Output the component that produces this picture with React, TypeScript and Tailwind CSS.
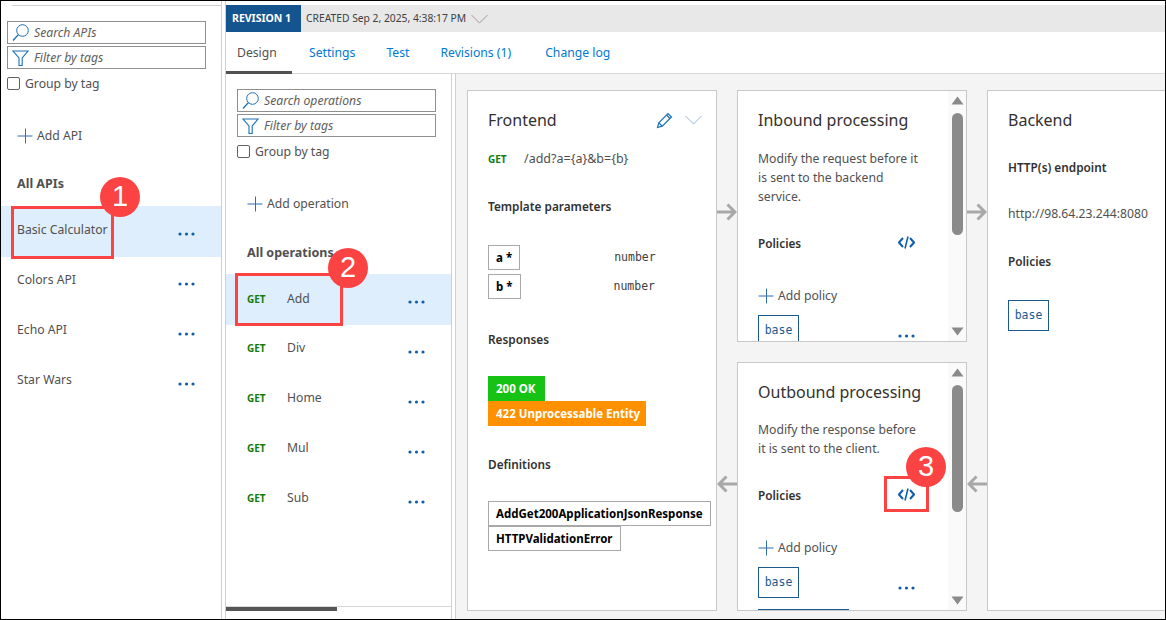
import React from "react";

const Search = () => (
  <svg width="18" height="18" viewBox="0 0 18 18" fill="none" stroke="#1a6fb5" strokeWidth="1" className="shrink-0">
    <circle cx="10.5" cy="6.5" r="5.8" />
    <path d="M6.4 10.6 1 16.5" strokeWidth="1.4" />
  </svg>
);
const Funnel = () => (
  <svg width="18" height="18" viewBox="0 0 18 18" fill="none" stroke="#1a6fb5" strokeWidth="1.1" className="shrink-0">
    <path d="M1 2h15l-5.8 7v7.5H7V9z" />
  </svg>
);
const Plus = () => (
  <svg width="16" height="16" viewBox="0 0 16 16" stroke="#2f6fb0" strokeWidth="1" className="shrink-0">
    <path d="M8.5 0.5v15M0.5 8h15" />
  </svg>
);
const Dots = () => (
  <svg width="17" height="4" viewBox="0 0 17 4" fill="#0f5ea8" className="shrink-0 block">
    <circle cx="2" cy="2" r="1.6" />
    <circle cx="8.5" cy="2" r="1.6" />
    <circle cx="15" cy="2" r="1.6" />
  </svg>
);
const Chevron = ({ c = "#8fb8dc" }: { c?: string }) => (
  <svg width="17" height="10" viewBox="0 0 17 10" fill="none" stroke={c} strokeWidth="1" className="shrink-0">
    <path d="M0.5 1 8.5 9l8-8" />
  </svg>
);
const Code = () => (
  <svg width="17" height="13" viewBox="0 0 17 13" fill="none" stroke="#0f5ea8" strokeWidth="2" className="shrink-0 -mt-[4px]">
    <path d="M5 2 1 6.5 5 11M12 2l4 4.5-4 4.5" />
    <path d="M10 0.5 7 12.5" strokeWidth="1.6" />
  </svg>
);
const Pencil = () => (
  <svg width="17" height="17" viewBox="0 0 17 17" fill="none" stroke="#1a6fb5" strokeWidth="1.2">
    <path d="M1.5 15.5 2.8 10.8 12 1.5l3.5 3.5-9.2 9.2zM2.8 10.8l3.5 3.4M10.5 3l3.5 3.5" />
  </svg>
);
const Arrow = ({ left }: { left?: boolean }) => (
  <svg width="20" height="18" viewBox="0 0 20 18" fill="none" stroke="#a8a8a8" strokeWidth="3" className={left ? "rotate-180" : ""}>
    <path d="M0 9h18M10.5 1.5 18 9l-7.5 7.5" />
  </svg>
);
const Tri = ({ down }: { down?: boolean }) => (
  <svg width="13" height="9" viewBox="0 0 13 9" fill="#8a8a8a" className={down ? "rotate-180" : ""}>
    <path d="M6.5 0.5 12.5 8.5H0.5z" />
  </svg>
);

const SearchBox = ({ text, icon }: { text: string; icon: React.ReactNode }) => (
  <div className="h-[23px] flex items-center pl-[4px] gap-[4px] border border-[#8f8f8f] italic text-[#605e5c] text-[12.2px]">
    {icon}
    <span className="pt-[2px]">{text}</span>
  </div>
);

const Group = () => (
  <div className="flex items-center gap-[5px] text-[#505050] text-[12.2px] mt-[3px] h-[20px]">
    <span className="w-[13px] h-[13px] border border-[#606060] rounded-[2px] -mt-[2px]" />
    <span>Group by tag</span>
  </div>
);

const ApiRow = ({ name, active }: { name: string; active?: boolean }) => (
  <div className={`shrink-0 pl-[16px] pr-[26px] flex justify-between ${active ? "h-[51px] bg-[#deeefc]" : "h-[50px]"}`}>
    <span className={`text-[#505050] text-[12.2px] leading-[18px] ${active ? "mt-[15px]" : "mt-[14px]"}`}>{name}</span>
    <span className={active ? "mt-[26px]" : "mt-[25px]"}><Dots /></span>
  </div>
);

const OpRow = ({ name, active }: { name: string; active?: boolean }) => (
  <div className={`shrink-0 pl-[21px] pr-[26px] flex justify-between ${active ? "h-[51px] bg-[#deeefc]" : "h-[50px]"}`}>
    <div className={`flex h-[18px] items-center ${active ? "mt-[16px]" : "mt-[14px]"}`}>
      <span className="w-[40px] text-[#107c10] text-[10px] font-bold">GET</span>
      <span className="text-[#505050] text-[12.2px]">{name}</span>
    </div>
    <span className={active ? "mt-[26px]" : "mt-[25px]"}><Dots /></span>
  </div>
);

const Scroll = ({ thumb }: { thumb: string }) => (
  <div className="w-[18px] shrink-0 bg-[#fafafa] flex flex-col items-center pt-[5px] pb-[5px]">
    <Tri />
    <div className={`w-[11px] rounded-full bg-[#8a8a8a] mt-[8px] ${thumb}`} />
    <div className="flex-1" />
    <Tri down />
  </div>
);

const Heading = ({ children }: { children: React.ReactNode }) => (
  <div className="text-[#323130] text-[16px] leading-[24px]">{children}</div>
);
const Sub = ({ children, className = "" }: { children: React.ReactNode; className?: string }) => (
  <div className={`text-[#323130] text-[11.8px] font-semibold leading-[16px] pb-[2px] ${className}`}>{children}</div>
);
const Chip = ({ children, className = "" }: { children: React.ReactNode; className?: string }) => (
  <div className={`h-[25px] flex items-center px-[7px] border border-[#a8a8a8] text-black text-[11.5px] font-bold w-fit ${className}`}>{children}</div>
);
const Base = ({ className = "" }: { className?: string }) => (
  <div className={`w-[41px] h-[31px] shrink-0 border border-[#1b5a8f] text-[#1b5a8f] text-[11.5px] flex items-center justify-center ${className}`} style={{ fontFamily: "'DejaVu Sans Mono', monospace" }}>base</div>
);
const AddPolicy = () => (
  <div className="flex items-center gap-[4px] text-[#505050] text-[12.2px] h-[18px]"><Plus />Add policy</div>
);

const Mark = ({ n, className }: { n: number; className: string }) => (
  <div className={`absolute w-[40px] h-[40px] rounded-full bg-[#fb4343] text-white text-[29px] flex items-center justify-center ${className}`} style={{ fontFamily: "'Liberation Sans', sans-serif" }}>{n}</div>
);

export default function App() {
  return (
    <div className="relative w-[1166px] h-[620px] bg-white border border-black flex overflow-hidden" style={{ fontFamily: "'Noto Sans', sans-serif" }}>
      {/* APIs */}
      <div className="w-[221px] h-full shrink-0 border-r border-[#d0d0d0] flex flex-col">
        <div className="h-[4px] shrink-0" />
        <div className="ml-[11px] h-px bg-[#d0d0d0] shrink-0" />
        <div className="px-[6px] mt-[15px] flex flex-col gap-[2px] w-[211px]">
          <SearchBox text="Search APIs" icon={<Search />} />
          <SearchBox text="Filter by tags" icon={<Funnel />} />
          <Group />
        </div>
        <div className="ml-[16px] mt-[33px] h-[18px] flex items-center gap-[4px] text-[#505050] text-[12.2px]"><Plus />Add API</div>
        <div className="ml-[16px] mt-[30px] h-[18px] flex items-center text-[#505050] text-[12.5px] font-bold">All APIs</div>
        <div className="mt-[13px] flex flex-col">
          <ApiRow name="Basic Calculator" active />
          <ApiRow name="Colors API" />
          <ApiRow name="Echo API" />
          <ApiRow name="Star Wars" />
        </div>
      </div>

      {/* Main */}
      <div className="ml-[3px] flex-1 min-w-0 h-full border-l border-[#d0d0d0] flex flex-col">
        <div className="h-[4px] shrink-0" />
        <div className="h-[27px] shrink-0 bg-[#e8e8e8] flex items-center text-[#404040] text-[10.3px] gap-[5px]">
          <div className="w-[75px] h-full bg-[#15558f] text-white font-bold text-[10.5px] flex items-center pl-[6px]">REVISION 1</div>
          <span>CREATED Sep 2, 2025, 4:38:17 PM</span>
          <Chevron c="#9a9a9a" />
        </div>
        <div className="h-[42px] shrink-0 border-b border-[#d8d8d8] flex text-[12.2px] text-[#0078d4]">
          <div className="w-[66px] h-[42px] border-b-[3px] border-[#505050] text-[#505050] pl-[11px] pt-[12px]">Design</div>
          <div className="ml-[17px] pt-[12px]">Settings</div>
          <div className="ml-[31px] pt-[12px]">Test</div>
          <div className="ml-[31px] pt-[12px]">Revisions (1)</div>
          <div className="ml-[34px] pt-[12px]">Change log</div>
        </div>
        <div className="flex-1 min-h-0 flex">
          {/* Operations */}
          <div className="w-[226px] shrink-0 border-r border-[#d0d0d0] flex flex-col">
            <div className="pl-[11px] pr-[15px] mt-[15px] flex flex-col gap-[2px]">
              <SearchBox text="Search operations" icon={<Search />} />
              <SearchBox text="Filter by tags" icon={<Funnel />} />
              <Group />
            </div>
            <div className="ml-[21px] mt-[33px] h-[18px] flex items-center gap-[4px] text-[#505050] text-[12.2px]"><Plus />Add operation</div>
            <div className="ml-[21px] mt-[31px] h-[18px] flex items-center text-[#505050] text-[12.5px] font-bold">All operations</div>
            <div className="mt-[12px] flex flex-col">
              <OpRow name="Add" active />
              <OpRow name="Div" />
              <OpRow name="Home" />
              <OpRow name="Mul" />
              <OpRow name="Sub" />
            </div>
            <div className="flex-1" />
            <div className="h-[13px] shrink-0 border-t border-[#d8d8d8]">
              <div className="w-[111px] h-[4px] bg-[#555555]" />
            </div>
          </div>

          {/* Canvas */}
          <div className="ml-[3px] flex-1 min-w-0 border-l border-[#d0d0d0] bg-[#f4f4f4] pl-[11px] pt-[16px] pb-[8px] flex overflow-hidden">
            {/* Frontend */}
            <div className="w-[250px] shrink-0 bg-white border border-[#c8c8c8] pt-[17px] px-[20px]">
              <div className="flex items-center justify-between h-[24px]">
                <Heading>Frontend</Heading>
                <div className="flex items-center gap-[12px] -mr-[6px]"><Pencil /><Chevron /></div>
              </div>
              <div className="flex items-center h-[18px] mt-[18px]">
                <span className="w-[36px] text-[#107c10] text-[10px] font-bold">GET</span>
                <span className="text-[#505050] text-[12.5px]">/add?a={"{a}"}&amp;b={"{b}"}</span>
              </div>
              <Sub className="mt-[30px]">Template parameters</Sub>
              <div className="mt-[29px] flex items-center h-[25px]">
                <Chip className="w-[31px]">a *</Chip>
                <span className="ml-[94px] text-[11.5px] text-[#404040]" style={{ fontFamily: "'DejaVu Sans Mono', monospace" }}>number</span>
              </div>
              <div className="mt-[4px] flex items-center h-[25px]">
                <Chip className="w-[32px]">b *</Chip>
                <span className="ml-[93px] text-[11.5px] text-[#404040]" style={{ fontFamily: "'DejaVu Sans Mono', monospace" }}>number</span>
              </div>
              <Sub className="mt-[32px]">Responses</Sub>
              <div className="mt-[27px] w-[57px] h-[25px] bg-[#16c213] text-white font-bold text-[11.5px] flex items-center pl-[8px]">200 OK</div>
              <div className="w-[158px] h-[25px] bg-[#ff9000] text-white font-bold text-[11.5px] flex items-center pl-[8px] whitespace-nowrap">422 Unprocessable Entity</div>
              <Sub className="mt-[30px]">Definitions</Sub>
              <Chip className="mt-[27px] whitespace-nowrap">AddGet200ApplicationJsonResponse</Chip>
              <Chip className="whitespace-nowrap">HTTPValidationError</Chip>
            </div>

            {/* Middle */}
            <div className="w-[20px] shrink-0 flex flex-col items-center">
              <div className="h-[244px] flex items-center shrink-0"><Arrow /></div>
              <div className="flex-1 flex items-center pt-[22px]"><Arrow left /></div>
            </div>
            <div className="w-[230px] shrink-0 flex flex-col gap-[20px]">
              <div className="h-[252px] shrink-0 bg-white border border-[#c8c8c8] flex overflow-hidden">
                <div className="flex-1 min-w-0 pt-[17px] pl-[20px]">
                  <Heading>Inbound processing</Heading>
                  <div className="mt-[17px] text-[#505050] text-[12.2px] leading-[19px]">Modify the request before it<br />is sent to the backend<br />service.</div>
                  <div className="mt-[29px] flex justify-between items-center pr-[33px]"><Sub>Policies</Sub><Code /></div>
                  <div className="mt-[34px]"><AddPolicy /></div>
                  <div className="mt-[10px] flex justify-between pr-[33px]"><Base /><span className="mt-[19px]"><Dots /></span></div>
                </div>
                <Scroll thumb="h-[122px]" />
              </div>
              <div className="flex-1 min-h-0 bg-white border border-[#c8c8c8] flex overflow-hidden">
                <div className="flex-1 min-w-0 pt-[17px] pl-[20px] overflow-hidden">
                  <Heading>Outbound processing</Heading>
                  <div className="mt-[16px] text-[#505050] text-[12.2px] leading-[19px]">Modify the response before<br />it is sent to the client.</div>
                  <div className="mt-[29px] flex justify-between items-center pr-[33px]"><Sub>Policies</Sub><Code /></div>
                  <div className="mt-[34px]"><AddPolicy /></div>
                  <div className="mt-[10px] flex justify-between pr-[33px]"><Base /><span className="mt-[19px]"><Dots /></span></div>
                  <div className="mt-[11px] w-[91px] h-[20px] border border-[#1b5a8f]" />
                </div>
                <Scroll thumb="h-[127px]" />
              </div>
            </div>
            <div className="w-[20px] shrink-0 flex flex-col items-center">
              <div className="h-[244px] flex items-center shrink-0"><Arrow /></div>
              <div className="flex-1 flex items-center pt-[22px]"><Arrow left /></div>
            </div>

            {/* Backend */}
            <div className="flex-1 min-w-0 bg-white border border-r-0 border-[#c8c8c8] pt-[17px] pl-[20px]">
              <Heading>Backend</Heading>
              <Sub className="mt-[27px]">HTTP(s) endpoint</Sub>
              <div className="mt-[28px] text-[#505050] text-[12.2px] leading-[18px]">http://98.64.23.244:8080</div>
              <Sub className="mt-[30px]">Policies</Sub>
              <Base className="mt-[29px]" />
            </div>
          </div>
        </div>
      </div>

      {/* Annotations */}
      <div className="absolute left-[10px] top-[205px] w-[103px] h-[53px] border-[3px] border-[#fb4343]" />
      <div className="absolute left-[234px] top-[272px] w-[108px] h-[53px] border-[3px] border-[#fb4343]" />
      <div className="absolute left-[883px] top-[475px] w-[45px] h-[36px] border-[3px] border-[#fb4343]" />
      <Mark n={1} className="left-[99px] top-[176px]" />
      <Mark n={2} className="left-[327px] top-[247px]" />
      <Mark n={3} className="left-[905px] top-[446px]" />
    </div>
  );
}
